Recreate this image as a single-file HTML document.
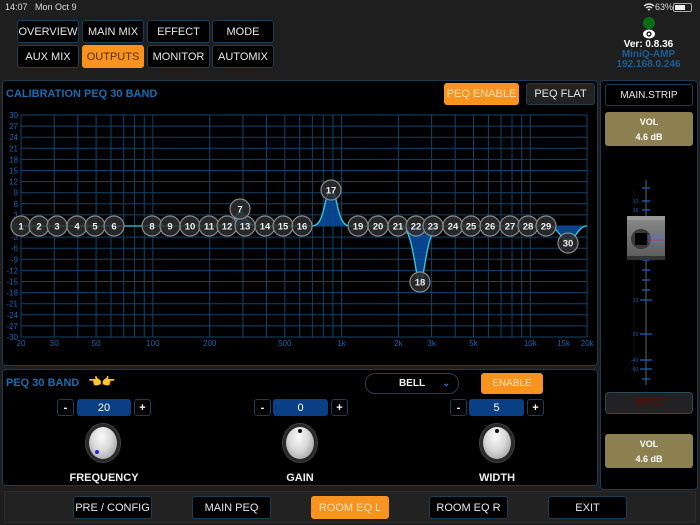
<!DOCTYPE html>
<html><head><meta charset="utf-8">
<style>
*{box-sizing:border-box;margin:0;padding:0}
body{width:700px;height:525px;background:#1e1e1e;font-family:"Liberation Sans",sans-serif;position:relative;overflow:hidden;color:#fff}
.a{position:absolute}
.btn{position:absolute;background:#000;border:1px solid #1d3d55;border-radius:3px;color:#e8e8e8;font-size:11px;display:flex;align-items:center;justify-content:center}
.or{background:#f7931e;color:#5a3000;border-color:#f7931e}
.pnl{position:absolute;background:#000;border:1px solid #1d3a52;border-radius:4px}
.sm{position:absolute;background:#000;border:1px solid #1d3d55;border-radius:3px;color:#fff;font-size:11px;font-weight:bold;display:flex;align-items:center;justify-content:center}
.val{position:absolute;background:#0a3f85;border-radius:3px;color:#fff;font-size:11px;display:flex;align-items:center;justify-content:center}
.knob{position:absolute;width:34px;height:38px;border-radius:50%;background:radial-gradient(ellipse at 45% 30%,#fafafa 0%,#d8d8d8 45%,#8a8a8a 100%);border:3px solid #2a2a2a;box-shadow:0 0 0 1px #444}
.lbl{position:absolute;font-size:11px;font-weight:bold;color:#eee;text-align:center;width:120px}
.vol{position:absolute;left:605px;width:88px;height:34px;background:#8c8050;border-radius:3px;color:#fff;font-size:9px;font-weight:bold;text-align:center;padding-top:3px;line-height:15px}
</style></head><body>
<div class="a" style="left:5px;top:2px;font-size:9px;color:#ddd">14:07&nbsp;&nbsp; Mon Oct 9</div>
<div class="a" style="left:655px;top:2px;font-size:9px;color:#ddd">63%</div>
<svg class="a" style="left:643px;top:3px" width="12" height="9"><path d="M1 3Q6 -1 11 3M3 5Q6 2.5 9 5M5 7Q6 6 7 7" stroke="#ddd" stroke-width="1.4" fill="none"/></svg>
<div class="a" style="left:673px;top:3px;width:19px;height:9px;border:1px solid #aaa;border-radius:2px"><div style="width:10px;height:5px;margin:1px;background:#eee"></div></div>

<div class="btn" style="left:17px;top:20px;width:62px;height:23px">OVERVIEW</div>
<div class="btn" style="left:82px;top:20px;width:62px;height:23px">MAIN MIX</div>
<div class="btn" style="left:147px;top:20px;width:63px;height:23px">EFFECT</div>
<div class="btn" style="left:212px;top:20px;width:62px;height:23px">MODE</div>
<div class="btn" style="left:17px;top:45px;width:62px;height:23px">AUX MIX</div>
<div class="btn or" style="left:82px;top:45px;width:62px;height:23px">OUTPUTS</div>
<div class="btn" style="left:147px;top:45px;width:63px;height:23px">MONITOR</div>
<div class="btn" style="left:212px;top:45px;width:62px;height:23px">AUTOMIX</div>

<div class="a" style="left:643px;top:17px;width:12px;height:12px;border-radius:50%;background:#0a6e14"></div>
<svg class="a" style="left:642px;top:29px" width="14" height="10"><ellipse cx="7" cy="5" rx="6" ry="4.5" fill="#fff"/><circle cx="7" cy="5" r="2.6" fill="#111"/><circle cx="7" cy="5" r="1.3" fill="#fff"/></svg>
<div class="a" style="left:600px;top:40px;width:97px;text-align:center;font-size:10px;font-weight:bold;line-height:10px;color:#fff">Ver: 0.8.36</div>
<div class="a" style="left:600px;top:50px;width:97px;text-align:center;font-size:10px;font-weight:bold;line-height:10px;color:#1b5e98">MiniQ-AMP</div>
<div class="a" style="left:600px;top:60px;width:97px;text-align:center;font-size:10px;font-weight:bold;line-height:10px;color:#1b5e98">192.168.0.246</div>

<div class="pnl" style="left:2px;top:80px;width:596px;height:286px"></div>
<div class="a" style="left:6px;top:88px;font-size:11px;font-weight:bold;color:#1a6bb0">CALIBRATION PEQ 30 BAND</div>
<div class="btn or" style="left:444px;top:83px;width:75px;height:22px;color:#fde0b8">PEQ ENABLE</div>
<div class="btn" style="left:526px;top:83px;width:69px;height:22px;background:#222">PEQ FLAT</div>
<svg id="g" class="a" style="left:0;top:108px" width="598" height="240"></svg>

<div class="pnl" style="left:600px;top:80px;width:98px;height:410px"></div>
<div class="btn" style="left:605px;top:84px;width:88px;height:22px;font-size:10px">MAIN.STRIP</div>
<div class="vol" style="top:112px">VOL<br>4.6 dB</div>
<svg class="a" style="left:600px;top:175px" width="98" height="215">
<line x1="46" y1="5" x2="46" y2="210" stroke="#333" stroke-width="2"/>
<line x1="34" y1="15" x2="34" y2="205" stroke="#111" stroke-width="1"/>
<g stroke="#1a5fb5" stroke-width="1.3">
<line x1="42" y1="13" x2="50" y2="13"/><line x1="42" y1="26" x2="50" y2="26"/><line x1="42" y1="35" x2="50" y2="35"/>
<line x1="42" y1="85" x2="50" y2="85"/><line x1="42" y1="95" x2="50" y2="95"/><line x1="42" y1="105" x2="50" y2="105"/><line x1="42" y1="115" x2="50" y2="115"/><line x1="40" y1="125" x2="52" y2="125"/>
<line x1="40" y1="159" x2="52" y2="159"/><line x1="40" y1="185" x2="52" y2="185"/><line x1="40" y1="194" x2="52" y2="194"/><line x1="42" y1="204" x2="50" y2="204"/></g>
<g fill="#1a5fb5" font-size="5" font-family="Liberation Sans"><text x="33" y="28">12</text><text x="33" y="37">10</text><text x="31" y="127">-10</text><text x="31" y="161">-20</text><text x="31" y="187">-40</text><text x="31" y="196">-90</text></g>
<rect x="27" y="41" width="38" height="44" fill="url(#fd)"/>
<rect x="27" y="41" width="38" height="4" fill="#9a9a9a"/><rect x="27" y="81" width="38" height="4" fill="#333"/>
<circle cx="41" cy="64" r="10" fill="#3a3a3a"/><rect x="35" y="58" width="12" height="12" fill="#000"/>
<g stroke-width="0.8"><line x1="48" y1="61" x2="64" y2="61" stroke="#4a7ae0"/><line x1="48" y1="63" x2="64" y2="63" stroke="#4a7ae0"/><line x1="48" y1="65" x2="64" y2="65" stroke="#c04060"/><line x1="48" y1="67" x2="64" y2="67" stroke="#4a7ae0"/></g>
<defs><linearGradient id="fd" x1="0" y1="0" x2="0" y2="1"><stop offset="0" stop-color="#8a8a8a"/><stop offset="1" stop-color="#5a5a5a"/></linearGradient></defs>
</svg>
<div class="a" style="left:605px;top:392px;width:88px;height:22px;background:#222;border:1px solid #2a4a60;border-radius:4px;color:#5c0a0a;font-size:10px;font-weight:bold;text-align:center;line-height:20px">MUTE</div>
<div class="vol" style="top:434px">VOL<br>4.6 dB</div>

<div class="pnl" style="left:2px;top:369px;width:596px;height:117px"></div>
<div class="a" style="left:6px;top:377px;font-size:11px;font-weight:bold;color:#1a6bb0">PEQ 30 BAND</div>
<div class="a" style="left:88px;top:375px;font-size:11px;color:#f5b800">👈👉</div>
<div class="a" style="left:365px;top:373px;width:94px;height:21px;border:1px solid #2a3a4a;border-radius:10px;font-size:10px;font-weight:bold;color:#eee;text-align:center;line-height:19px">BELL<span style="position:absolute;right:8px;color:#2a7ad0;font-size:9px">⌄</span></div>
<div class="btn or" style="left:481px;top:373px;width:62px;height:21px;color:#fde0b8;font-size:10px">ENABLE</div>

<div class="sm" style="left:57px;top:399px;width:17px;height:17px">-</div>
<div class="val" style="left:77px;top:399px;width:54px;height:17px">20</div>
<div class="sm" style="left:134px;top:399px;width:17px;height:17px">+</div>
<div class="sm" style="left:254px;top:399px;width:17px;height:17px">-</div>
<div class="val" style="left:273px;top:399px;width:55px;height:17px">0</div>
<div class="sm" style="left:331px;top:399px;width:17px;height:17px">+</div>
<div class="sm" style="left:450px;top:399px;width:17px;height:17px">-</div>
<div class="val" style="left:469px;top:399px;width:55px;height:17px">5</div>
<div class="sm" style="left:527px;top:399px;width:17px;height:17px">+</div>

<div class="knob" style="left:86px;top:424px"><div style="position:absolute;left:6px;top:23px;width:4px;height:4px;border-radius:50%;background:#1030e0"></div></div>
<div class="knob" style="left:283px;top:424px"><div style="position:absolute;left:12px;top:2px;width:4px;height:4px;border-radius:50%;background:#111"></div></div>
<div class="knob" style="left:480px;top:424px"><div style="position:absolute;left:12px;top:2px;width:4px;height:4px;border-radius:50%;background:#111"></div></div>
<div class="lbl" style="left:44px;top:472px">FREQUENCY</div>
<div class="lbl" style="left:240px;top:472px">GAIN</div>
<div class="lbl" style="left:437px;top:472px">WIDTH</div>

<div class="a" style="left:4px;top:491px;width:692px;height:32px;background:#222;border:1px solid #2a2a2a"></div>
<div class="btn" style="left:73px;top:496px;width:79px;height:23px">PRE / CONFIG</div>
<div class="btn" style="left:192px;top:496px;width:79px;height:23px">MAIN PEQ</div>
<div class="btn or" style="left:311px;top:496px;width:78px;height:23px;color:#fde0b8">ROOM EQ L</div>
<div class="btn" style="left:429px;top:496px;width:79px;height:23px">ROOM EQ R</div>
<div class="btn" style="left:548px;top:496px;width:79px;height:23px">EXIT</div>

<script>
var s='',X=f=>21+188.7*Math.log10(f/20),Y=d=>118-d*3.7; // svg top=108, 0dB at 226
for(var d=-30;d<=30;d+=3){var y=Y(d);s+='<line x1="21" x2="587" y1="'+y+'" y2="'+y+'" stroke="#12446a" stroke-width="1"/>';
s+='<text x="18" y="'+(y+3)+'" fill="#1a64b8" font-size="8" text-anchor="end" font-family="Liberation Sans">'+d+'</text>';}
var fs=[20,30,40,50,60,70,80,90,100,200,300,400,500,600,700,800,900,1000,2000,3000,4000,5000,6000,7000,8000,9000,10000,20000];
fs.forEach(f=>{var x=X(f);s+='<line y1="7" y2="229" x1="'+x+'" x2="'+x+'" stroke="#12446a" stroke-width="1"/>';});
[[20,'20'],[30,'30'],[50,'50'],[100,'100'],[200,'200'],[500,'500'],[1000,'1k'],[2000,'2k'],[3000,'3k'],[5000,'5k'],[10000,'10k'],[15000,'15k'],[20000,'20k']].forEach(a=>{s+='<text x="'+X(a[0])+'" y="238" fill="#1a64b8" font-size="8" text-anchor="middle" font-family="Liberation Sans">'+a[1]+'</text>';});
var p='M21 118 L225 118 C235 118 236 104 240 104 C244 104 246 118 258 118 L312 118 C326 118 324 82 331 82 C338 82 336 118 350 118 L400 118 C414 118 415 174 420 174 C425 174 426 118 440 118 L548 118 C558 118 560 132 568 132 C576 132 578 118 587 118';
s+='<path d="'+p+' Z" fill="#0a4a9a" opacity="0.9"/><path d="'+p+'" fill="none" stroke="#30d0e0" stroke-width="1.3"/>';
var n=[[1,21,118],[2,39,118],[3,57,118],[4,77,118],[5,95,118],[6,114,118],[8,152,118],[9,170,118],[10,190,118],[11,209,118],[12,227,118],[13,245,118],[14,265,118],[15,283,118],[16,302,118],[7,240,101],[17,331,82],[19,358,118],[20,378,118],[21,398,118],[22,416,118],[23,433,118],[24,453,118],[25,471,118],[26,490,118],[27,510,118],[28,528,118],[29,546,118],[30,568,135],[18,420,174]];
n.forEach(a=>{s+='<circle cx="'+a[1]+'" cy="'+a[2]+'" r="10" fill="#2e2e2e" fill-opacity="0.85" stroke="#8a8a8a" stroke-width="1.2"/><text x="'+a[1]+'" y="'+(a[2]+3.5)+'" fill="#eee" font-size="9.5" font-weight="bold" text-anchor="middle" font-family="Liberation Sans">'+a[0]+'</text>';});
document.getElementById('g').innerHTML=s;
</script>
</body></html>
